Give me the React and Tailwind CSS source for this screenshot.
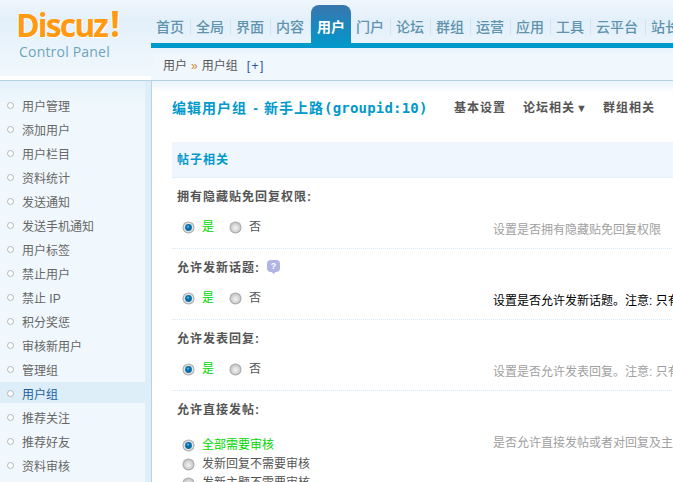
import React from "react";

const CJK = { fontFamily: '"Liberation Sans","Noto Sans CJK SC",sans-serif' };

const nav = ["首页","全局","界面","内容","用户","门户","论坛","群组","运营","应用","工具","云平台","站长"];
const side = ["用户管理","添加用户","用户栏目","资料统计","发送通知","发送手机通知","用户标签","禁止用户","禁止 IP","积分奖惩","审核新用户","管理组","用户组","推荐关注","推荐好友","资料审核"];

function Radio({ on }) {
  return (
    <svg width="13" height="13" viewBox="0 0 13 13" className="shrink-0">
      <defs>
        <radialGradient id="rOff" cx="50%" cy="55%" r="55%">
          <stop offset="0" stopColor="#f4f4f4" />
          <stop offset="1" stopColor="#c4c4c4" />
        </radialGradient>
      </defs>
      <circle cx="6.5" cy="6.5" r="6" fill="#a8a8a8" />
      <circle cx="6.5" cy="6.5" r="5" fill={on ? "#e2e2e2" : "url(#rOff)"} />
      {on && <circle cx="6.5" cy="6.5" r="3.4" fill="#0a6da6" />}
      {on && <circle cx="6" cy="5.6" r="1.2" fill="#4fb0e0" />}
    </svg>
  );
}

function Row({ label, help, desc, dark, h = "h-[71px]" }) {
  return (
    <div className={`${h} border-b border-dotted border-[#d8ecf8]`}>
      <div className="h-[37px] pl-[5px] flex items-center gap-[7px] font-bold text-[12px] tracking-[1px] text-[#555]">
        <span>{label}:</span>
        {help && (
          <span className="relative mt-[-3px] w-[13px] h-[12px] rounded-[4px] bg-[#b0b4e2] text-white text-[9px] tracking-normal leading-[12px] text-center">
            ?
            <span className="absolute left-[3px] top-[11px] w-0 h-0 border-l-[4px] border-r-[2px] border-t-[3px] border-l-transparent border-r-transparent border-t-[#b0b4e2]" />
          </span>
        )}
      </div>
      <div className="flex items-center h-[25px]">
        <div className="w-[321px] shrink-0 pl-[10px] flex items-center text-[12px]">
          <Radio on />
          <span className="ml-[7px] mt-[-2px] text-[#00d800]">是</span>
          <span className="ml-[15px]"><Radio /></span>
          <span className="ml-[7px] mt-[-2px] text-[#555]">否</span>
        </div>
        <div className={`mt-[4px] text-[12px] whitespace-nowrap ${dark ? "text-black" : "text-[#a0a0a0]"}`}>{desc}</div>
      </div>
    </div>
  );
}

export default function App() {
  return (
    <div className="w-[673px] h-[482px] overflow-hidden bg-white flex flex-col" style={CJK}>
      {/* Header */}
      <header className="h-[81px] shrink-0 flex border-b border-[#b5d3e3] bg-[linear-gradient(#f0f6fd,#e3f0fa_20px,#f0f7fd_72px)]">
        <div className="w-[151px] shrink-0 flex flex-col pl-[16px] pt-[7px] border-b-[4px] border-white">
          <div className="h-[34px] leading-[34px] text-[32px] font-bold tracking-[-1.9px] text-[#ff9a12] [text-shadow:1px_1px_0_#fff,-1px_0_0_#fff] whitespace-nowrap" style={{ fontFamily: '"Open Sans",sans-serif' }}>
            Discuz<span className="ml-[3px] text-[35px] leading-[34px]">!</span>
          </div>
          <div className="mt-[2px] pl-[3px] text-[14px] leading-[18px] text-[#6fa4bd] tracking-[0.2px]" style={{ fontFamily: '"Open Sans",sans-serif' }}>Control Panel</div>
        </div>
        <div className="flex-1 min-w-0 flex flex-col overflow-hidden">
          <nav className="h-[48px] shrink-0 pt-[5px] border-b-[5px] border-[#0099cc] flex whitespace-nowrap">
            {nav.map((n) => {
              const active = n === "用户";
              return (
                <div
                  key={n}
                  className={
                    active
                      ? "w-[40px] h-[43px] shrink-0 rounded-t-[8px] bg-[linear-gradient(#3876ae,#0099cc)] text-white font-bold text-[14px] text-center leading-[45px]"
                      : `${n === "云平台" ? "w-[55px]" : "w-[40px]"} h-[16px] mt-[14px] shrink-0 border-r border-[#d4e4ee] text-[14px] font-medium text-[#5f93ad] pl-[5px] leading-[16px]`
                  }
                >
                  {n}
                </div>
              );
            })}
          </nav>
          <div className="mt-[5px] mb-[2px] h-[25px] shrink-0 ml-[2px] bg-[#f0f7fd] text-[12px] text-[#555] pl-[10px] pt-[1px] flex items-center">
            用户<span className="mx-[4px] text-[#d08a3c]">»</span>用户组
            <span className="ml-[9px] text-[#2c539e] tracking-[1.5px]">[+]</span>
          </div>
        </div>
      </header>

      <div className="flex-1 min-h-0 flex">
        {/* Sidebar */}
        <aside className="w-[152px] shrink-0 border-r border-[#b5d3e3] bg-[#deeef9] overflow-hidden">
          <ul className="w-[145px] h-full bg-[linear-gradient(#e4f1fb,#f0f8fd_24px)] pt-[13px] flex flex-col gap-[3px] text-[12px] text-[#666]">
            {side.map((s) => (
              <li key={s} className={`h-[21px] shrink-0 flex items-center pl-[7px] pt-[4px] ${s === "用户组" ? "bg-[#deeef9] text-[#1a60a0] w-[146px]" : ""}`}>
                <span className="w-[7px] h-[7px] rounded-full border border-[#b4b4b4] bg-white mr-[8px] mt-[-2px]" />
                {s}
              </li>
            ))}
          </ul>
        </aside>

        {/* Main */}
        <main className="flex-1 min-w-0 overflow-hidden bg-[linear-gradient(#e9f3fa,#fff_12px)] pl-[20px]">
          <div className="w-[600px]">
            <div className="h-[61px] flex items-start pt-[18px] whitespace-nowrap">
              <h1 className="w-[282px] shrink-0 flex text-[14px] leading-[18px] font-bold text-[#0099cc] tracking-[1px]">
                <span>编辑用户组</span>
                <span className="w-[17px] text-center tracking-normal">-</span>
                <span>新手上路</span>
                <span className="tracking-[0.2px]" style={{ fontFamily: '"DejaVu Sans Mono","Noto Sans CJK SC",monospace' }}>(groupid:10)</span>
              </h1>
              <div className="flex text-[12px] font-bold text-[#555] leading-[18px] tracking-[1px]">
                <span className="w-[69px]">基本设置</span>
                <span className="w-[80px]">论坛相关<span className="text-[11px] tracking-normal ml-[1px]">▼</span></span>
                <span>群组相关</span>
              </div>
            </div>
            <div className="h-[36px] bg-[#f0f6fd] border-b border-dotted border-[#d8ecf8] pl-[5px] pt-[1px] flex items-center text-[12px] font-bold tracking-[1px] text-[#0099cc]">帖子相关</div>
            <Row label="拥有隐藏贴免回复权限" desc="设置是否拥有隐藏贴免回复权限" />
            <Row label="允许发新话题" help dark desc="设置是否允许发新话题。注意: 只有在允许发新话题时才有效" />
            <Row label="允许发表回复" desc="设置是否允许发表回复。注意: 只有在允许发表回复时才有效" />
            <div>
              <div className="h-[37px] pl-[5px] flex items-center font-bold text-[12px] tracking-[1px] text-[#555]">允许直接发帖:</div>
              <div className="flex">
                <div className="w-[321px] shrink-0 pl-[10px] pt-[10px] flex flex-col gap-[5px] text-[12px]">
                  <div className="flex items-center h-[14px]"><Radio on /><span className="ml-[7px] text-[#00d800]">全部需要审核</span></div>
                  <div className="flex items-center h-[14px]"><Radio /><span className="ml-[7px] text-[#555]">发新回复不需要审核</span></div>
                  <div className="flex items-center h-[14px]"><Radio /><span className="ml-[7px] text-[#555]">发新主题不需要审核</span></div>
                </div>
                <div className="pt-[6px] text-[12px] text-[#a0a0a0] whitespace-nowrap">是否允许直接发帖或者对回复及主题进行审核</div>
              </div>
            </div>
          </div>
        </main>
      </div>
    </div>
  );
}
